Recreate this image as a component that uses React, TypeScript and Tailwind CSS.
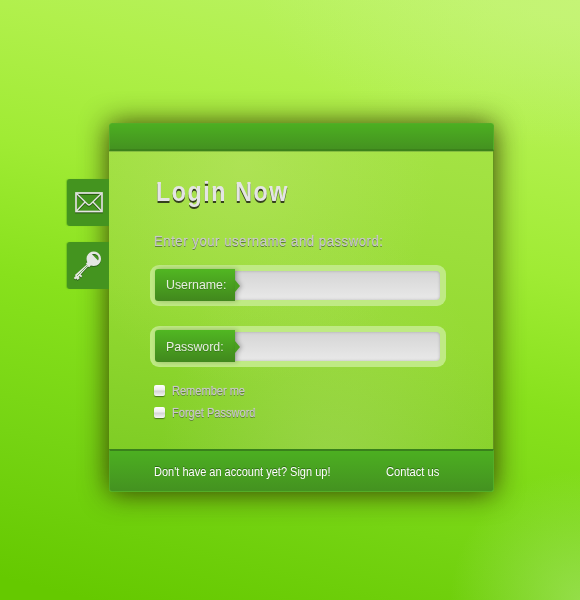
import React from "react";

function MailIcon() {
  return (
    <svg width="28" height="22" viewBox="0 0 28 22" fill="none" className="ml-px drop-shadow-[0_1px_0_#24520f]">
      <rect x="1" y="1" width="26" height="18.500" stroke="#e4e6e2" strokeWidth="1.7" />
      <path d="M1.500 1.500 12.500 12.300q1.500 1.300 3 0L26.500 1.500M1.500 19 9.800 10.300M26.500 19 18.200 10.300" stroke="#e4e6e2" strokeWidth="1.4" />
    </svg>
  );
}

function KeyIcon() {
  return (
    <svg width="29" height="31" viewBox="0 0 29 31" className="-ml-[2px] drop-shadow-[0_1px_0_#2c611a]">
      <path
        fillRule="evenodd"
        fill="#e4e6e2"
        d="M20.700 1.500C25 1.500 28 4.800 28 8.800C28 13 25 16 20.700 16C19.600 16 18.700 15.800 17.800 15.500L16.200 17.200L15 16.400L7.600 24.600L9.200 26L8.100 27.400L6.600 26.100L5.700 27L6.700 28.100L4.700 30L3.300 28.600L2.200 29.400L.8 27.900L2.600 26L1.900 25.100L13.800 14.600L12.900 13.700L14.300 12.200C13.700 11.200 13.500 10 13.500 8.800C13.500 4.800 16.700 1.500 20.700 1.500ZM19 4.300C20.500 3.600 23 3.900 24.400 5.300C25.800 6.700 26.100 8.800 25 10.500Z"
      />
      <path d="M4 26 14.500 15.500" stroke="#58a139" strokeWidth="0.8" />
    </svg>
  );
}

function SideTab({ label, children }: { label: string; children: React.ReactNode }) {
  return (
    <button
      aria-label={label}
      className="flex h-[47px] w-[42px] items-center justify-center rounded-l-[3px] bg-[#44941f] shadow-[-1px_0_1px_rgba(80,165,25,0.5)]"
    >
      {children}
    </button>
  );
}

function Field({ label, type, offset }: { label: string; type: string; offset: string }) {
  return (
    <label className="-ml-1 flex h-[41px] w-[296px] rounded-[9px] bg-[#bfea84] p-[5px] pt-[4px]">
      <span className="relative z-10 flex h-8 w-20 shrink-0 items-center rounded-l-[3px] bg-linear-to-b from-[#51b722] to-[#41881d] pl-[11px] shadow-[2px_0_5px_rgba(0,0,0,0.24)]">
        <span className={"origin-left scale-x-[0.950] text-[13px] leading-4 whitespace-nowrap text-[#e6eee0] [text-shadow:0_1px_0_#397a1a] " + offset}>{label}</span>
        <svg width="5" height="12" viewBox="0 0 5 12" className="absolute top-[11px] left-20 drop-shadow-[2px_0_2px_rgba(0,0,0,0.25)]">
          <path d="M0 0 5 6 0 12Z" fill="#499f20" />
        </svg>
      </span>
      <input
        type={type}
        className="mt-[2px] h-[29px] w-[205px] rounded-r-[4px] bg-linear-to-b from-[#d5d5d5] to-[#e9e9e9] px-3 text-[13px] shadow-[inset_0_0_3px_rgba(0,0,0,0.22)] outline-none"
      />
    </label>
  );
}

function Option({ label }: { label: string }) {
  return (
    <label className="flex items-start gap-[7px]">
      <input
        type="checkbox"
        className="mt-px size-[11px] appearance-none rounded-[2px] bg-[linear-gradient(#fff,#eee_45%,#d4d4d4_55%,#f5f5f5)] shadow-[0_1px_1px_rgba(40,70,20,0.65)]"
      />
      <span className="origin-left scale-x-[0.920] text-[12px] leading-[14px] whitespace-nowrap text-[#c8c8c8] [text-shadow:0_1px_0_#5f8138,0_0_1px_#c8c8c8]">{label}</span>
    </label>
  );
}

export default function App() {
  return (
    <main className="flex h-[600px] w-[580px] items-start overflow-hidden bg-[radial-gradient(circle_at_100%_100%,rgba(170,230,110,0.6),transparent_130px),radial-gradient(ellipse_320px_150px_at_100%_0%,rgba(208,245,135,0.45),transparent),linear-gradient(194deg,#bcf368_3%,#b1f04c_20%,#a0eb34_38%,#88e11c_56%,#76d413_77%,#65c900_97%)] pt-[123px] pl-[67px] font-['Liberation_Sans',Arial,sans-serif]">
      <nav className="relative z-10 mt-[56px] flex w-[42px] flex-col gap-4">
        <SideTab label="Mail"><MailIcon /></SideTab>
        <SideTab label="Key"><KeyIcon /></SideTab>
      </nav>
      <section className="flex h-[369px] w-[385px] flex-col rounded-[3px] shadow-[0_1px_28px_0_rgba(48,48,0,0.95)]">
        <header className="h-[28px] shrink-0 rounded-t-[3px] border border-b-2 border-[#53ad28] border-b-[#3c821b] bg-linear-to-b from-[#4caf21] to-[#449220]" />
        <div className="flex h-[298px] flex-col border-r border-[#64931f] bg-[radial-gradient(ellipse_at_35%_5%,rgba(200,230,125,0.35),transparent_55%),radial-gradient(ellipse_at_58%_110%,rgba(185,220,120,0.38),transparent_55%),linear-gradient(190deg,#a4e344,#94da32_55%,#7fcd25)] pl-[45px] shadow-[inset_0_1px_0_#85bd40]">
          <h1 className="mt-[25px] ml-[2px] h-8 origin-left scale-x-[0.830] text-[28px] leading-8 font-bold tracking-[1.900px] whitespace-nowrap text-[#e4e4e4] [text-shadow:0_2px_0_#34401d]">Login Now</h1>
          <p className="mt-[25px] h-4 origin-left scale-x-[0.940] text-[14px] leading-4 tracking-[0.560px] whitespace-nowrap text-[#c8c8c8] [text-shadow:0_1px_0_#5f8138,0_0_1px_#c8c8c8]">Enter your username and password:</p>
          <div className="mt-4 -ml-0 flex flex-col gap-5">
            <Field label="Username:" type="text" offset="mt-0" />
            <Field label="Password:" type="password" offset="mt-[2px]" />
          </div>
          <div className="mt-[17px] flex flex-col gap-2">
            <Option label="Remember me" />
            <Option label="Forget Password" />
          </div>
        </div>
        <footer className="flex h-[43px] items-center rounded-b-[3px] border border-t-2 border-[#53ad28] border-t-[#39811b] bg-linear-to-b from-[#4caf21] to-[#449220] pt-[2px] pl-[44px] text-[12px] text-white [text-shadow:0_-1px_0_#306e17]">
          <a href="#" className="w-[232px] origin-left scale-x-[0.917] whitespace-nowrap">Don't have an account yet? Sign up!</a>
          <a href="#" className="origin-left scale-x-[0.930] whitespace-nowrap">Contact us</a>
        </footer>
      </section>
    </main>
  );
}
